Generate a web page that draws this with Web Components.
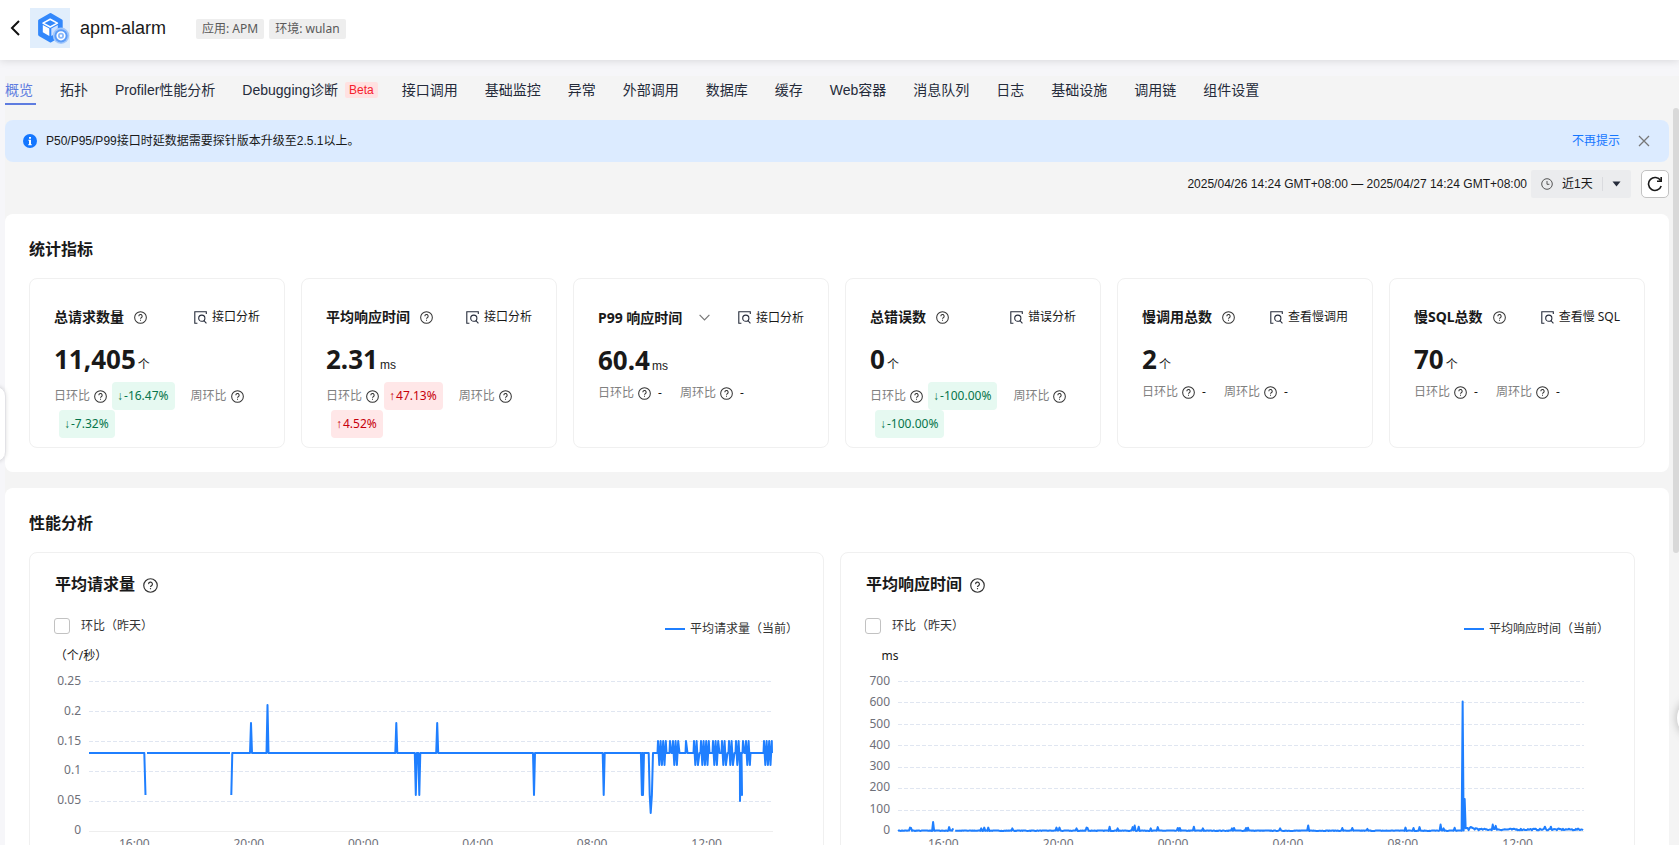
<!DOCTYPE html>
<html lang="zh-CN">
<head>
<meta charset="utf-8">
<title>apm-alarm</title>
<style>
  html, body
  {
    margin: 0;
    height: 100%;
    overflow: hidden;
    background: #f6f6f9;
    --font-ui: "Liberation Sans", "Noto Sans CJK SC", sans-serif;
    --font-data: "Noto Sans", "Noto Sans CJK SC", sans-serif;
    --text: #191919;
    --muted: #808080;
    --line: #f0f0f0;
    --blue: #1f7fff;
    color: var(--text);
    font: 12px/20px var(--font-ui);
  }
</style>
</head>
<body>
<apm-page>
  <apm-header slot="header" name="apm-alarm">
    <apm-tag>应用: APM</apm-tag>
    <apm-tag>环境: wulan</apm-tag>
  </apm-header>

  <nav-tabs>
    <nav-tab active>概览</nav-tab>
    <nav-tab>拓扑</nav-tab>
    <nav-tab>Profiler性能分析</nav-tab>
    <nav-tab badge="Beta">Debugging诊断</nav-tab>
    <nav-tab>接口调用</nav-tab>
    <nav-tab>基础监控</nav-tab>
    <nav-tab>异常</nav-tab>
    <nav-tab>外部调用</nav-tab>
    <nav-tab>数据库</nav-tab>
    <nav-tab>缓存</nav-tab>
    <nav-tab>Web容器</nav-tab>
    <nav-tab>消息队列</nav-tab>
    <nav-tab>日志</nav-tab>
    <nav-tab>基础设施</nav-tab>
    <nav-tab>调用链</nav-tab>
    <nav-tab>组件设置</nav-tab>
  </nav-tabs>

  <notice-bar>P50/P95/P99接口时延数据需要探针版本升级至2.5.1以上。</notice-bar>

  <time-bar>2025/04/26 14:24 GMT+08:00 — 2025/04/27 14:24 GMT+08:00</time-bar>

  <panel-section heading="统计指标" layout="metrics">
    <metric-card heading="总请求数量" value="11,405" unit="个" action="接口分析" day="-16.47%" week="-7.32%"></metric-card>
    <metric-card heading="平均响应时间" value="2.31" unit="ms" action="接口分析" day="47.13%" week="4.52%"></metric-card>
    <metric-card heading="P99 响应时间" value="60.4" unit="ms" action="接口分析" pick></metric-card>
    <metric-card heading="总错误数" value="0" unit="个" action="错误分析" day="-100.00%" week="-100.00%"></metric-card>
    <metric-card heading="慢调用总数" value="2" unit="个" action="查看慢调用"></metric-card>
    <metric-card heading="慢SQL总数" value="70" unit="个" action="查看慢 SQL"></metric-card>
  </panel-section>

  <panel-section heading="性能分析" layout="charts">
    <chart-card id="requests" heading="平均请求量" unit="（个/秒）" axis="59"></chart-card>
    <chart-card id="latency" heading="平均响应时间" unit="ms" axis="57"></chart-card>
  </panel-section>
</apm-page>

<script>
(function(){

// Fills the shadow root of a new element from a template
function attach(el, html)
{
  const template = document.createElement('template');
  template.innerHTML = html;
  const root = el.attachShadow({mode: 'open'});
  root.appendChild(template.content.cloneNode(true));
  return root;
}

customElements.define('help-icon', class extends HTMLElement {
  constructor()
  {
    super();
    attach(this, `
<style>
  :host { display: inline-flex; width: 13px; height: 13px; flex: none; }
  :host([large]) { width: 15px; height: 15px; }
  svg { width: 100%; height: 100%; }
</style>
<svg viewBox="0 0 14 14" fill="none" stroke="#333" stroke-width="1.1" aria-hidden="true">
  <circle cx="7" cy="7" r="6.3"/>
  <path d="M5.2 5.7a1.8 1.8 0 1 1 2.7 1.5c-.6.4-.9.6-.9 1.2"/>
  <path d="M7 9.4v1.1"/>
</svg>`);
  }
});

customElements.define('apm-page', class extends HTMLElement {
  constructor()
  {
    super();
    attach(this, `
<style>
  :host { display: flex; flex-direction: column; height: 100vh; overflow: hidden; }
  .body { flex: 1; min-height: 0; padding: 16px 10px 0 5px; display: flex; background: linear-gradient(#f4f4f4, #f4f4f4) 5px 16px no-repeat; }
  main { flex: 1; min-width: 0; overflow: hidden; }
  .thumb { position: fixed; right: 0; top: 108px; width: 6px; height: 445px; border-radius: 4px; background: #d9d9d9; }
  .drawer { position: fixed; left: -16px; top: 386px; width: 22px; height: 76px; border: 1px solid #e2e2e6; border-radius: 10px; background: #fff; box-shadow: 0 0 4px #0002; padding: 0; }
  .float { position: fixed; right: -38px; top: 698px; width: 40px; height: 40px; border: 0; border-radius: 50%; background: #fff; box-shadow: 0 0 10px #0004; padding: 0; }
</style>
<slot name="header"></slot>
<div class="body"><main><slot></slot></main></div>
<div class="thumb"></div>
<button class="drawer" aria-label="展开"></button>
<button class="float" aria-label="帮助"></button>`);
  }
});

customElements.define('apm-tag', class extends HTMLElement {
  constructor()
  {
    super();
    attach(this, `
<style>
  :host { display: block; padding: 0 6px; border-radius: 2px; background: #eee; color: #595959; font: 12px/20px var(--font-data); white-space: nowrap; }
</style>
<slot></slot>`);
  }
});

customElements.define('apm-header', class extends HTMLElement {
  constructor()
  {
    super();
    const root = attach(this, `
<style>
  :host { display: flex; align-items: center; box-sizing: border-box; height: 60px; padding: 0 10px 4px; background: #fff; box-shadow: 0 1px 8px #0000001f; position: relative; }
  button { border: 0; background: none; padding: 0; width: 20px; height: 40px; display: flex; align-items: center; cursor: pointer; }
  .logo { width: 40px; height: 40px; }
  h1 { margin: 0 30px 0 10px; font-size: 18px; font-weight: 400; line-height: 26px; }
  .tags { display: flex; gap: 5px; padding-top: 2px; }
</style>
<button aria-label="返回"><svg width="10" height="16" viewBox="0 0 10 16" fill="none" stroke="#111" stroke-width="2"><path d="M9 1 2 8l7 7"/></svg></button>
<svg class="logo" viewBox="0 0 40 40" aria-hidden="true">
  <rect width="40" height="40" fill="#e1eefc"/>
  <path d="M20.5 6.5 31.2 12.8V26.6L20.5 33 9.6 26.6V12.8Z" fill="#3388fb" stroke="#3388fb" stroke-width="3" stroke-linejoin="round"/>
  <path d="M20.2 11.2 27.4 15.1 20.2 19 13 15.1Z" fill="#3388fb" stroke="#fff" stroke-width="1.6" stroke-linejoin="round"/>
  <path d="M12.8 17 19.3 20.5V28L12.8 24.3Z" fill="#fff"/>
  <path d="M21.3 20.5 27.8 17V24.3L21.3 28Z" fill="#cfe2ff"/>
  <circle cx="31" cy="27.8" r="8.2" fill="#a3c8fb"/>
  <circle cx="31" cy="27.8" r="6.6" fill="#5b9cf8"/>
  <circle cx="31" cy="27.8" r="3.8" fill="#8bb9fb" stroke="#fff" stroke-width="1.6"/>
  <circle cx="31" cy="27.8" r="1.2" fill="#fff"/>
</svg>
<h1></h1>
<div class="tags"><slot></slot></div>`);
    root.querySelector('h1').textContent = this.getAttribute('name');
  }
});

customElements.define('nav-tabs', class extends HTMLElement {
  constructor()
  {
    super();
    attach(this, `
<style>
  :host { display: block; margin-bottom: 15px; }
  nav { display: flex; gap: 27px; height: 29px; }
</style>
<nav><slot></slot></nav>`);
  }
});

customElements.define('nav-tab', class extends HTMLElement {
  constructor()
  {
    super();
    const root = attach(this, `
<style>
  :host { display: block; flex: none; }
  a { display: flex; align-items: center; height: 29px; box-sizing: border-box; border-bottom: 2px solid transparent; color: #252b3a; font-size: 14px; line-height: 28px; text-decoration: none; white-space: nowrap; }
  :host([active]) a { color: #5e7ce0; border-color: #5e7ce0; margin-right: -3px; padding-right: 3px; }
  :host([badge]) a { margin-right: -3px; }
  .badge { margin-left: 7px; padding: 0 4px; border-radius: 2px; background: #ffe1e1; color: #f5222d; font-size: 12px; line-height: 16px; }
  .badge:empty { display: none; }
</style>
<a href="#"><slot></slot><span class="badge"></span></a>`);
    root.querySelector('.badge').textContent = this.getAttribute('badge') || '';
  }
});

customElements.define('notice-bar', class extends HTMLElement {
  constructor()
  {
    super();
    const root = attach(this, `
<style>
  :host { display: flex; align-items: center; height: 42px; padding: 0 19px 0 18px; border-radius: 8px; background: #dcebff; margin-bottom: 8px; }
  .text { flex: 1; margin-left: 9px; }
  a { color: #1476ff; text-decoration: none; margin-right: 18px; }
  button { border: 0; background: none; padding: 0; display: flex; cursor: pointer; }
</style>
<svg width="14" height="14" viewBox="0 0 14 14" aria-hidden="true">
  <circle cx="7" cy="7" r="7" fill="#1476ff"/>
  <path d="M6 3h2v1.8H6zM5.4 5.8H8v4.4h.8v1H5.2v-1H6V6.8h-.6z" fill="#fff"/>
</svg>
<span class="text"><slot></slot></span>
<a href="#">不再提示</a>
<button aria-label="关闭"><svg width="12" height="12" viewBox="0 0 12 12" stroke="#777" stroke-width="1.3"><path d="m1 1 10 10M11 1 1 11"/></svg></button>`);
    root.querySelector('button').addEventListener('click', () => this.remove());
  }
});

customElements.define('time-bar', class extends HTMLElement {
  constructor()
  {
    super();
    attach(this, `
<style>
  :host { display: flex; align-items: center; justify-content: flex-end; height: 28px; margin-bottom: 16px; }
  .range { display: flex; align-items: center; height: 28px; box-sizing: border-box; padding: 0 10px; margin: 0 10px 0 4px; border-radius: 2px; background: #ebecee; }
  select { appearance: none; border: 0; background: none; padding: 0; margin: 0 9px; color: var(--text); font: 12px/20px var(--font-ui); }
  .caret { border-left: 1px solid #dadbdf; padding-left: 9px; height: 14px; display: flex; align-items: center; }
  button { display: flex; align-items: center; justify-content: center; width: 28px; height: 28px; padding: 0; border: 1px solid #c2c2c2; border-radius: 5px; background: #fff; }
</style>
<span><slot></slot></span>
<label class="range">
  <svg width="12" height="12" viewBox="0 0 12 12" fill="none" stroke="#555"><circle cx="6" cy="6" r="5.3"/><path d="M6 3v3.3h2.4"/></svg>
  <select aria-label="时间范围"><option>近1天</option></select>
  <span class="caret"><svg width="9" height="6" viewBox="0 0 9 6"><path d="M.5.5h8L4.5 5.5z" fill="#252b3a"/></svg></span>
</label>
<button aria-label="刷新"><svg width="16" height="16" viewBox="0 0 16 16" fill="none" stroke="#191919" stroke-width="1.6"><path d="M13.6 4.6A6.5 6.5 0 1 0 14.2 10"/><path d="M14.2 1v4.2H10"/></svg></button>`);
  }
});

customElements.define('panel-section', class extends HTMLElement {
  constructor()
  {
    super();
    const root = attach(this, `
<style>
  :host { display: block; padding: 24px; margin-bottom: 16px; border-radius: 8px; background: #fff; }
  h2 { margin: 0 0 16px; font-size: 16px; line-height: 24px; }
  .grid { display: grid; gap: 16px; }
  :host([layout=metrics]) .grid { grid-template-columns: repeat(6, minmax(0, 1fr)); }
  :host([layout=charts]) .grid { grid-template-columns: repeat(2, minmax(0, 1fr)); padding-right: 10px; }
</style>
<h2></h2>
<div class="grid"><slot></slot></div>`);
    root.querySelector('h2').textContent = this.getAttribute('heading');
  }
});

customElements.define('metric-card', class extends HTMLElement {
  constructor()
  {
    super();
    const heading = this.getAttribute('heading');
    const title = this.hasAttribute('pick')
      ? `<span class="pick"><select aria-label="指标"><option>${heading}</option></select>
         <svg width="11" height="7" viewBox="0 0 11 7" fill="none" stroke="#777" stroke-width="1.2"><path d="m.6.8 4.9 5 4.9-5"/></svg></span>`
      : `<h3>${heading}</h3><help-icon></help-icon>`;

    attach(this, `
<style>
  :host { display: block; padding: 24px 24px 9px; border: 1px solid var(--line); border-radius: 8px; font-family: var(--font-data); }
  header { display: flex; align-items: center; min-height: 28px; margin-bottom: 10px; white-space: nowrap; }
  h3 { margin: 0 10px 0 0; font-size: 14px; line-height: 20px; }
  .pick { display: flex; align-items: center; gap: 16px; }
  select { appearance: none; height: 29px; border: 0; background: none; padding: 0; color: inherit; font: bold 14px/20px var(--font-data); }
  .action { display: flex; align-items: center; gap: 5px; margin-left: auto; color: inherit; text-decoration: none; }
  .value { font-size: 26px; font-weight: 700; line-height: 36px; margin-bottom: 5px; }
  .value small { font: 12px/20px var(--font-ui); margin-left: 2px; }
  .trend { display: flex; flex-wrap: wrap; align-items: center; }
  .label { display: flex; align-items: center; gap: 4px; color: var(--muted); }
  .badge + .label, .none + .label { margin-left: 16px; }
  .badge { margin-left: 5px; padding: 0 6px 0 5px; border-radius: 4px; line-height: 28px; }
  .badge i { font: 12px/20px var(--font-ui); margin-right: 1px; }
  .down { background: #e6f9f1; color: #06754c; }
  .up { background: #ffe7e8; color: #c7000b; }
  .none { margin-left: 5px; padding: 0 2px; }
</style>
<header>
  ${title}
  <a class="action" href="#">
    <svg width="13" height="13" viewBox="0 0 13 13" fill="none" stroke="#252b3a" stroke-width="1.1" aria-hidden="true"><path d="M12.3 3V.8H.8v11.4h2.6"/><circle cx="7.8" cy="7.2" r="3.1"/><path d="m9.9 9.5 2.5 2.8"/></svg>
    <span>${this.getAttribute('action')}</span>
  </a>
</header>
<div class="value">${this.getAttribute('value')}<small>${this.getAttribute('unit')}</small></div>
<div class="trend">
  <span class="label">日环比<help-icon></help-icon></span>${this.badge('day')}
  <span class="label">周环比<help-icon></help-icon></span>${this.badge('week')}
</div>`);
  }

  badge(attr)
  {
    const val = this.getAttribute(attr);
    if (!val)
      return '<span class="none">-</span>';
    const down = val[0] == '-';
    return `<span class="badge ${down ? 'down' : 'up'}"><i>${down ? '↓' : '↑'}</i>${val}</span>`;
  }
});

customElements.define('chart-card', class extends HTMLElement {
  constructor()
  {
    super();
    const heading = this.getAttribute('heading');
    this._shadowRoot = attach(this, `
<style>
  :host { display: block; padding: 20px 0 24px; border: 1px solid var(--line); border-radius: 8px; --axis: ${this.getAttribute('axis')}px; font-family: var(--font-data); }
  h3 { display: flex; align-items: center; gap: 8px; margin: 0 25px 15px; font: bold 16px/24px var(--font-ui); }
  .tools { display: flex; align-items: center; justify-content: space-between; height: 28px; margin: 0 25px 6px 24px; }
  label { display: flex; align-items: center; gap: 11px; color: #333; }
  input { appearance: none; width: 16px; height: 16px; margin: 0; border: 1px solid #c2c2c2; border-radius: 3px; background: #fff; }
  .legend { display: flex; align-items: center; gap: 5px; padding-top: 6px; color: #333; }
  .legend::before { content: ""; width: 20px; height: 2px; background: var(--blue); }
  .unit { width: calc((var(--axis) - 8px) * 2); text-align: center; margin-bottom: 15px; }
  .plot { display: flex; height: 150px; margin-right: 50px; }
  .ylabels { display: flex; flex-direction: column; justify-content: space-between; flex: none; width: var(--axis); height: 149px; box-sizing: border-box; padding-right: 8px; text-align: right; color: #6e7079; }
  .ylabels span { height: 0; line-height: 0; }
  svg { flex: 1; min-width: 0; height: 150px; overflow: visible; }
  .grid { stroke: #e0e6f1; stroke-dasharray: 4 2; }
  .base { stroke: #eee; }
  .line { stroke: var(--blue); stroke-width: 2; fill: none; stroke-linejoin: round; }
  path { vector-effect: non-scaling-stroke; }
  .xlabels { display: flex; justify-content: space-between; margin: 4px 101px 0 calc(var(--axis) + 30px); line-height: 17px; color: #6e7079; }
</style>
<h3>${heading}<help-icon large></help-icon></h3>
<div class="tools">
  <label><input type="checkbox">环比（昨天）</label>
  <span class="legend">${heading}（当前）</span>
</div>
<div class="unit">${this.getAttribute('unit')}</div>
<div class="plot"><div class="ylabels"></div><svg viewBox="0 0 684 150" preserveAspectRatio="none"></svg></div>
<div class="xlabels"></div>`);
  }

  // ticks: from top to bottom; lines: arrays of [x, value]
  draw(ticks, hours, lines)
  {
    const max = ticks[0];
    this._shadowRoot.querySelector('.ylabels').innerHTML = ticks.map(t => `<span>${t}</span>`).join('');
    this._shadowRoot.querySelector('.xlabels').innerHTML = hours.map(h => `<span>${h}</span>`).join('');

    let svg = '';
    ticks.forEach((t, i) => {
      const y = Math.round(150 * i / (ticks.length - 1)) + 0.5;
      svg += `<path class="${t ? 'grid' : 'base'}" d="M0 ${y}H684"/>`;
    });
    lines.forEach(pts => {
      svg += `<path class="line" d="M${pts.map(p => p[0].toFixed(1) + ' ' + (150 - p[1] / max * 150).toFixed(1)).join('L')}"/>`;
    });
    this._shadowRoot.querySelector('svg').innerHTML = svg;
  }
});

const hours = ['16:00', '20:00', '00:00', '04:00', '08:00', '12:00'];

// single peak that leaves the steady rate and comes back
function peak(x, v)
{
  return [[x - 1, 0.13], [x, v], [x + 1, 0.13]];
}

const tail = [[142.3, 0.06], [143.3, 0.13]];
[[162, 0.18], [178.5, 0.21], [307.3, 0.18], [326.8, 0.06], [330.3, 0.06], [348.2, 0.18],
 [445, 0.06], [514.7, 0.06], [552.9, 0.06], [554, 0.06]].forEach(p => tail.push(...peak(p[0], p[1])));
tail.push([559.7, 0.13], [560.7, 0.06], [561.7, 0.03], [562.9, 0.06], [564, 0.13]);

// stretches where the rate flips between 0.11 and 0.15
[[569, 577], [581, 582], [584, 590], [597, 598], [605, 610], [612, 620], [624, 630],
 [633, 638], [640, 645], [647, 652], [654, 655], [657, 661], [675, 683]].forEach(r => {
  tail.push([r[0] - 0.5, 0.13]);
  for (let x = r[0], i = 0; x <= r[1]; x += 1.3, i++)
    tail.push([x, i % 2 ? 0.11 : 0.15]);
  if (r[0] == 647)
    tail.push([651, 0.05], [652, 0.13], [653, 0.06]);
  tail.push([Math.min(r[1] + 0.5, 683), 0.13]);
});

document.querySelector('#requests').draw([0.25, 0.2, 0.15, 0.1, 0.05, 0], hours, [
  [[0, 0.13], [55.3, 0.13], [56.5, 0.06]],
  [[58, 0.13], [141, 0.13]],
  tail
]);

const spikes = {
  12: 16, 13: 14, 35: 42, 51: 18, 55: 12, 83: 12, 86: 16, 90: 16, 114: 12, 158: 16, 161: 16, 178: 12,
  188: 16, 189: 14, 211: 20, 219: 12, 234: 18, 236: 25, 240: 20, 252: 12, 259: 18, 279: 14, 281: 14,
  295: 20, 304: 12, 333: 12, 335: 14, 347: 14, 349: 15, 381: 12, 409: 26, 443: 14, 453: 14, 468: 10,
  506: 16, 514: 14, 520: 18, 541: 30, 544: 12, 555: 15, 563: 605, 565: 150, 593: 30, 596: 24, 645: 20, 651: 20
};
let seed = 7;
const first = [], second = [];
for (let x = 0; x <= 683; x++)
{
  seed = (seed * 16807) % 2147483647;
  const noise = seed / 2147483647;
  const quiet = x < 566 ? noise * 3 : 3 + noise * (x < 580 ? 16 : 8);
  if (x != 56)
    (x < 56 ? first : second).push([x, spikes[x] || quiet]);
}

document.querySelector('#latency').draw([700, 600, 500, 400, 300, 200, 100, 0], hours, [first, second]);

})();
</script>
</body>
</html>
